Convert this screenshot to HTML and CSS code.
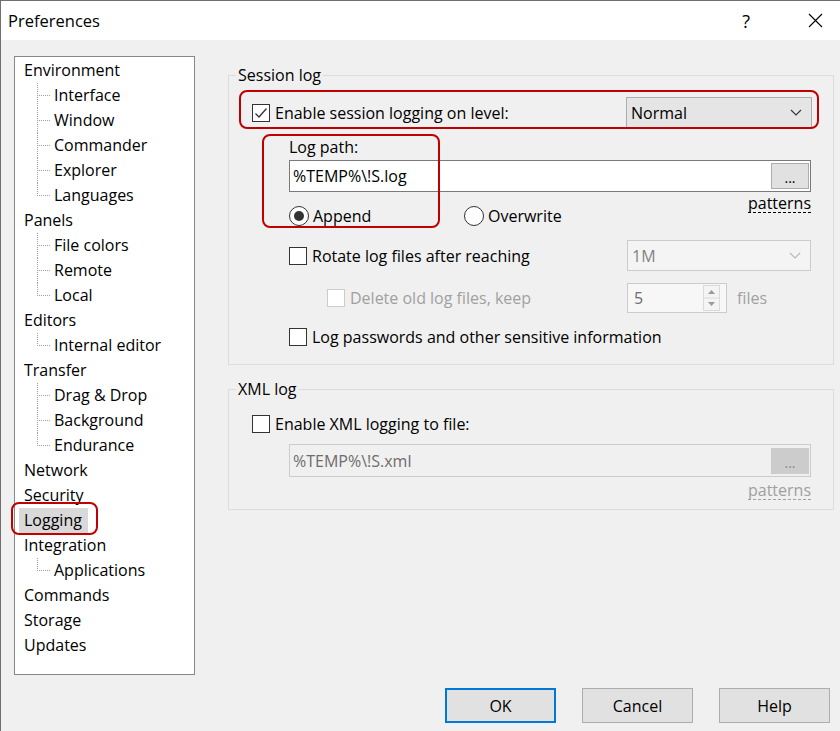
FILE: index.html
```html
<!DOCTYPE html>
<html lang="en">
<head>
    <meta charset="UTF-8">
    <title>Preferences</title>
    <link rel="stylesheet" href="styles.css">
</head>
<body>
<div class="window">
    <div class="titlebar">
        <span class="title">Preferences</span>
        <span class="title-help">?</span>
        <span class="title-close">
            <svg width="15" height="15" viewBox="0 0 15 15"><path d="M1 1L14 14M14 1L1 14" stroke="#000" stroke-width="1.1" fill="none"/></svg>
        </span>
    </div>
    <div class="dialog">
        <div class="main">
            <ul class="tree">
                <li>Environment
                    <ul class="children">
                        <li>Interface</li>
                        <li>Window</li>
                        <li>Commander</li>
                        <li>Explorer</li>
                        <li>Languages</li>
                    </ul>
                </li>
                <li>Panels
                    <ul class="children">
                        <li>File colors</li>
                        <li>Remote</li>
                        <li>Local</li>
                    </ul>
                </li>
                <li>Editors
                    <ul class="children">
                        <li>Internal editor</li>
                    </ul>
                </li>
                <li>Transfer
                    <ul class="children">
                        <li>Drag &amp; Drop</li>
                        <li>Background</li>
                        <li>Endurance</li>
                    </ul>
                </li>
                <li>Network</li>
                <li>Security</li>
                <li class="selected"><span class="label">Logging<span class="mark mark-tree"></span></span></li>
                <li>Integration
                    <ul class="children">
                        <li>Applications</li>
                    </ul>
                </li>
                <li>Commands</li>
                <li>Storage</li>
                <li>Updates</li>
            </ul>

            <div class="page">
                <fieldset class="group">
                    <legend>Session log</legend>
                    <div class="level-row">
                        <label class="check">
                            <span class="box"><svg width="14" height="14" viewBox="0 0 14 14"><path d="M1.5 7.5L5 11L12.5 2.5" stroke="#333" stroke-width="1.3" fill="none"/></svg></span>
                            Enable session logging on level:
                        </label>
                        <div class="combo">
                            <span>Normal</span>
                            <svg width="12" height="7" viewBox="0 0 12 7"><path d="M1 1L6 6L11 1" stroke="#333" stroke-width="1.1" fill="none"/></svg>
                        </div>
                        <span class="mark mark-level"></span>
                    </div>

                    <div class="path-block">
                        <div class="field-label">Log path:</div>
                        <div class="edit">
                            <span>%TEMP%\!S.log</span>
                            <span class="browse">...</span>
                        </div>
                        <div class="path-options">
                            <div class="radios">
                                <label class="radio first"><span class="dot on"></span>Append</label>
                                <label class="radio"><span class="dot"></span>Overwrite</label>
                            </div>
                            <span class="link">patterns</span>
                        </div>
                        <span class="mark mark-path"></span>
                    </div>

                    <div class="opt-row rotate-row">
                        <label class="check"><span class="box"></span>Rotate log files after reaching</label>
                        <div class="combo disabled">
                            <span>1M</span>
                            <svg width="12" height="7" viewBox="0 0 12 7"><path d="M1 1L6 6L11 1" stroke="#b5b5b5" stroke-width="1.1" fill="none"/></svg>
                        </div>
                    </div>

                    <div class="opt-row delete-row">
                        <label class="check off"><span class="box"></span>Delete old log files, keep</label>
                        <div class="spin-wrap">
                            <div class="spin">
                                <span>5</span>
                                <svg width="17" height="26" viewBox="0 0 17 26">
                                    <rect x="0.5" y="0.5" width="16" height="25" fill="#f4f4f4" stroke="#dadada"/>
                                    <line x1="1" y1="13" x2="16" y2="13" stroke="#dadada"/>
                                    <path d="M5 9L8.5 5L12 9Z" fill="#9a9a9a"/>
                                    <path d="M5 17L8.5 21L12 17Z" fill="#9a9a9a"/>
                                </svg>
                            </div>
                            <span class="files">files</span>
                        </div>
                    </div>

                    <div class="passwords-row">
                        <label class="check"><span class="box"></span>Log passwords and other sensitive information</label>
                    </div>
                </fieldset>

                <fieldset class="group xml">
                    <legend>XML log</legend>
                    <div class="xml-check">
                        <label class="check"><span class="box"></span>Enable XML logging to file:</label>
                    </div>
                    <div class="edit disabled">
                        <span>%TEMP%\!S.xml</span>
                        <span class="browse">...</span>
                    </div>
                    <div class="xml-links">
                        <span class="link">patterns</span>
                    </div>
                </fieldset>
            </div>
        </div>

        <div class="buttons">
            <button class="btn default">OK</button>
            <button class="btn">Cancel</button>
            <button class="btn">Help</button>
        </div>
    </div>
</div>
</body>
</html>
```

FILE: styles.css
```css
*{
    margin:0;
    padding:0;
    box-sizing:border-box;
}
body{
    font-family:"Open Sans", "Noto Sans", sans-serif;
    font-size:16px;
    color:#000;
    background:#f0f0f0;
}
li{
    list-style:none;
}

/* window frame */
.window{
    width:840px;
    height:731px;
    border-top:1px solid #707070;
    border-left:1px solid #707070;
    background:#f0f0f0;
}
.titlebar{
    height:39px;
    background:#fff;
    display:flex;
    align-items:center;
    padding-left:7px;
}
.title{
    flex:1;
    font-size:16.5px;
}
.title-help{
    font-size:18px;
    margin-right:58px;
}
.title-close{
    display:flex;
    width:15px;
    height:15px;
    margin-right:17px;
}

.dialog{
    padding:16px 0 0 13px;
}
.main{
    display:flex;
    align-items:flex-start;
}

/* navigation tree */
.tree{
    width:181px;
    height:619px;
    border:1px solid #828790;
    background:#fff;
    padding-top:1px;
}
.tree li{
    line-height:25px;
    white-space:nowrap;
}
.tree > li{
    padding-left:9px;
}
.children li{
    position:relative;
    padding-left:30px;
}
.children li::before{
    content:"";
    position:absolute;
    left:13px;
    top:0;
    bottom:0;
    border-left:1px dotted #a0a0a0;
}
.children li:last-child::before{
    bottom:12px;
}
.children li::after{
    content:"";
    position:absolute;
    left:13px;
    top:12px;
    width:13px;
    border-top:1px dotted #a0a0a0;
}
.tree .label{
    position:relative;
    display:inline-block;
    height:25px;
    padding:0 6px 0 5px;
    margin-left:-5px;
    background:#d9d9d9;
}

/* red callouts */
.mark{
    position:absolute;
    border:2px solid #c00000;
    border-radius:8px;
    pointer-events:none;
}
.mark-tree{
    left:-8px;
    top:-6px;
    width:87px;
    height:33px;
}
.mark-level{
    left:10px;
    right:14px;
    top:-7px;
    bottom:-1px;
}
.mark-path{
    left:33px;
    top:-3px;
    width:178px;
    height:94px;
}

/* option page */
.page{
    width:606px;
    margin-left:33px;
    margin-top:9px;
}
.group{
    border:1px solid #dcdcdc;
    padding:0;
}
.group legend{
    line-height:20px;
    margin-left:7px;
    padding:0 2px;
}

.check{
    display:flex;
    align-items:center;
    gap:5px;
    line-height:20px;
}
.box{
    flex:none;
    width:18px;
    height:18px;
    border:1px solid #333;
    background:#fff;
    display:flex;
    align-items:center;
    justify-content:center;
}
.check.off{
    color:#a0a0a0;
}
.check.off .box{
    border-color:#cccccc;
}

.combo{
    width:186px;
    height:31px;
    background:#e5e5e5;
    border:1px solid #adadad;
    display:flex;
    align-items:center;
    justify-content:space-between;
    padding:0 9px 0 4px;
}
.combo.disabled{
    width:184px;
    background:#f4f4f4;
    border-color:#cccccc;
    color:#838383;
}

.level-row{
    position:relative;
    display:flex;
    align-items:center;
    justify-content:space-between;
    height:31px;
    margin-top:12px;
    padding:0 21px 0 23px;
}

.path-block{
    position:relative;
    margin-top:9px;
    padding:0 22px 0 60px;
}
.field-label{
    line-height:20px;
}
.edit{
    margin-top:3px;
    height:32px;
    border:1px solid #7a7a7a;
    background:#fff;
    display:flex;
    align-items:center;
    justify-content:space-between;
    padding:0 1px 0 3px;
}
.browse{
    width:38px;
    height:26px;
    background:#e1e1e1;
    border:1px solid #adadad;
    display:flex;
    justify-content:center;
    align-items:flex-end;
    font-size:14px;
    line-height:20px;
}
.path-options{
    display:flex;
    justify-content:space-between;
    align-items:flex-start;
    margin-top:3px;
}
.radios{
    display:flex;
    margin-top:11px;
}
.radio{
    display:flex;
    align-items:center;
    gap:4px;
    line-height:20px;
}
.radio.first{
    width:175px;
}
.dot{
    width:20px;
    height:20px;
    border:1px solid #333;
    border-radius:50%;
    background:#fff;
    display:flex;
    align-items:center;
    justify-content:center;
}
.dot.on::after{
    content:"";
    width:10px;
    height:10px;
    border-radius:50%;
    background:#333;
}
.link{
    line-height:17px;
    border-bottom:1px dashed #000;
}

.opt-row{
    display:grid;
    grid-template-columns:338px 184px;
    align-items:center;
    padding-left:60px;
}
.rotate-row{
    margin-top:14px;
    height:31px;
}
.delete-row{
    margin-top:12px;
    height:30px;
}
.delete-row .check{
    padding-left:38px;
}
.spin-wrap{
    display:flex;
    align-items:center;
}
.spin{
    width:100px;
    height:30px;
    border:1px solid #cccccc;
    background:#f7f7f7;
    color:#6d6d6d;
    display:flex;
    align-items:center;
    justify-content:space-between;
    padding:0 6px 0 6px;
}
.files{
    margin-left:10px;
    color:#a0a0a0;
}
.passwords-row{
    margin-top:14px;
    padding:0 0 17px 60px;
}

.xml{
    margin-top:14px;
}
.xml-check{
    margin-top:15px;
    padding-left:23px;
}
.edit.disabled{
    margin:10px 22px 0 60px;
    height:33px;
    border-color:#cccccc;
    background:#f0f0f0;
    color:#6d6d6d;
}
.edit.disabled .browse{
    background:#cccccc;
    border-color:#cccccc;
    color:#8a8a8a;
}
.xml-links{
    display:flex;
    justify-content:flex-end;
    padding:5px 22px 9px 0;
}
.xml-links .link{
    color:#a0a0a0;
    border-bottom-color:#a0a0a0;
}

/* dialog buttons */
.buttons{
    display:flex;
    justify-content:flex-end;
    gap:26px;
    margin-top:13px;
    padding-right:10px;
}
.btn{
    width:111px;
    height:35px;
    border:1px solid #adadad;
    background:#e1e1e1;
    font:inherit;
    color:#000;
}
.btn.default{
    border:2px solid #0078d7;
}
```
